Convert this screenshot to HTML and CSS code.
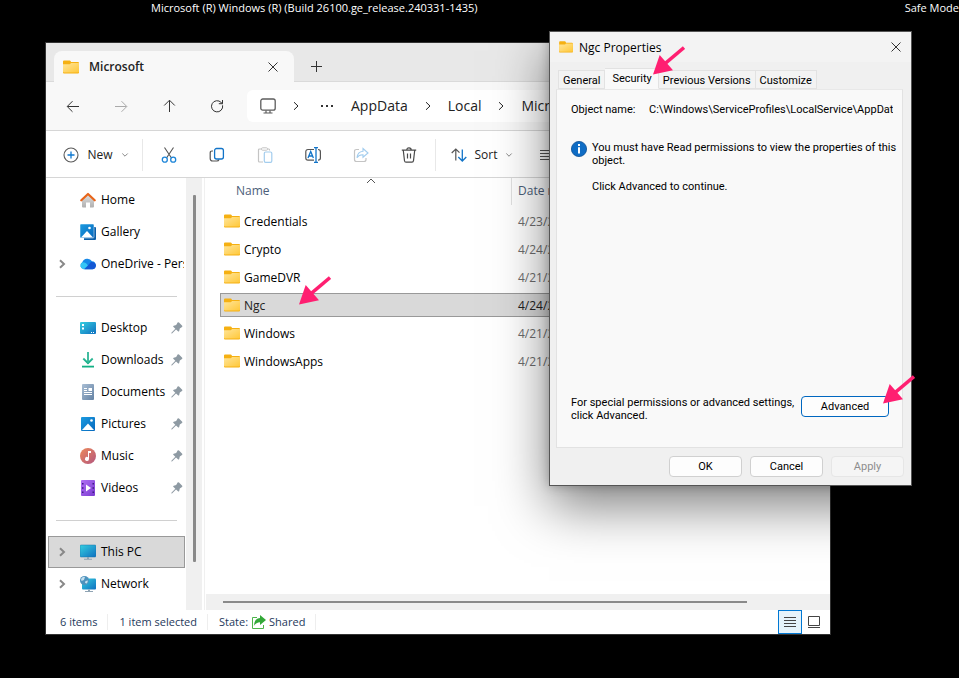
FILE: index.html
```html
<!DOCTYPE html>
<html lang="en">
<head>
    <meta charset="UTF-8">
    <meta name="viewport" content="width=device-width, initial-scale=1.0">
    <title>Ngc Properties</title>
    <link rel="stylesheet" href="styles.css">
</head>
<body>
    <!-- shared icons -->
    <svg class="sprite" aria-hidden="true">
        <defs>
            <linearGradient id="gFolder" x1="0" y1="0" x2="1" y2="1"><stop offset="0" stop-color="#ffe59a"/><stop offset="1" stop-color="#ffc83a"/></linearGradient>
            <linearGradient id="gBlue" x1="0" y1="0" x2="1" y2="1"><stop offset="0" stop-color="#1c9be0"/><stop offset="1" stop-color="#0668bd"/></linearGradient>
            <linearGradient id="gScreen" x1="0" y1="0" x2="1" y2="1"><stop offset="0" stop-color="#35cfe0"/><stop offset="1" stop-color="#0f70c0"/></linearGradient>
            <linearGradient id="gGreen" x1="0" y1="0" x2="0" y2="1"><stop offset="0" stop-color="#2fb796"/><stop offset="1" stop-color="#0fae84"/></linearGradient>
            <linearGradient id="gDoc" x1="0" y1="0" x2="1" y2="1"><stop offset="0" stop-color="#a9bed4"/><stop offset="1" stop-color="#6482a4"/></linearGradient>
            <linearGradient id="gMusic" x1="0" y1="0" x2="1" y2="1"><stop offset="0" stop-color="#ee8a5a"/><stop offset="1" stop-color="#b2567f"/></linearGradient>
            <linearGradient id="gVideo" x1="0" y1="0" x2="1" y2="1"><stop offset="0" stop-color="#b070f4"/><stop offset="1" stop-color="#7a3bd0"/></linearGradient>
            <linearGradient id="gHome" x1="0" y1="0" x2="0" y2="1"><stop offset="0" stop-color="#e0e0e0"/><stop offset="1" stop-color="#b0b0b0"/></linearGradient>
        </defs>
        <symbol id="folder" viewBox="0 0 16 14">
            <path fill="#f5b012" d="M0 1.4Q0 .4 1 .4H6.6Q7.400.400 7.700 1.200L8 2H15Q16 2 16 3V12.4Q16 13.4 15 13.4H1Q0 13.4 0 12.4Z"/>
            <path fill="url(#gFolder)" d="M0 4.200H6.600Q7.300 4.200 7.900 3H16V11.6Q16 12.5 15 12.5H1Q0 12.5 0 11.6Z"/>
        </symbol>
        <symbol id="pin" viewBox="0 0 12 12">
            <path fill="#8e9aa3" d="M6.6.6Q7.4 0 8 .6L11.2 3.8Q11.8 4.4 11 5L8.8 6.4 8.2 9Q7.8 10 7 9.300L5 7.400 1 11.400H.4V10.800L4.300 6.800 2.300 4.800Q1.700 4 2.700 3.700L5.200 3Z"/>
        </symbol>
        <symbol id="chevron" viewBox="0 0 8 10">
            <path fill="none" stroke="currentColor" d="M2 1.200 6 5 2 8.800"/>
        </symbol>
        <symbol id="down" viewBox="0 0 8 6">
            <path fill="none" stroke="#8a8a8a" d="M1.300 1.500 4 4.200 6.700 1.500"/>
        </symbol>
        <symbol id="close" viewBox="0 0 12 12">
            <path fill="none" stroke="currentColor" d="M1.500 1.500 10.500 10.500M10.500 1.500 1.500 10.500"/>
        </symbol>
        <symbol id="arrow" viewBox="0 0 32 29">
            <path fill="#ff1f71" d="M0 28.500 6.700 9 20 24.300Z"/>
            <path stroke="#ff1f71" stroke-width="3.400" d="M12 17.600 31 1.500"/>
        </symbol>
    </svg>

    <header class="desktop-label">
        <span>Microsoft (R) Windows (R) (Build 26100.ge_release.240331-1435)</span>
        <span>Safe Mode</span>
    </header>

    <main class="explorer">
        <div class="tab-strip">
            <div class="tab">
                <svg class="tab-folder"><use href="#folder"/></svg>
                <span class="tab-title">Microsoft</span>
                <button class="icon-btn" aria-label="Close tab"><svg class="i12"><use href="#close"/></svg></button>
            </div>
            <button class="icon-btn new-tab" aria-label="New tab">
                <svg class="i12" viewBox="0 0 12 12"><path fill="none" stroke="#333" d="M6.500 1V12M1 6.500H12"/></svg>
            </button>
        </div>

        <nav class="nav-bar">
            <button class="nav-btn" aria-label="Back"><svg class="i14" viewBox="0 0 14 14"><path fill="none" stroke="#333" d="M13 7.500H1.500M6.500 2.200 1.200 7.500 6.500 12.800"/></svg></button>
            <button class="nav-btn" aria-label="Forward" disabled><svg class="i14" viewBox="0 0 14 14"><path fill="none" stroke="#aaa" d="M1 7.500H12.500M7.500 2.200 12.800 7.500 7.500 12.800"/></svg></button>
            <button class="nav-btn" aria-label="Up"><svg class="i14" viewBox="0 0 14 14"><path fill="none" stroke="#333" d="M7.500 13V1.500M2.200 6.500 7.500 1.200 12.800 6.500"/></svg></button>
            <button class="nav-btn" aria-label="Refresh"><svg class="i14" viewBox="0 0 14 14"><path fill="none" stroke="#333" d="M12.600 6.300A5.600 5.600 0 1 1 11.200 3.500L12.400 4.700M12.500 1V4.700H8.800"/></svg></button>
            <div class="address">
                <svg class="i16" viewBox="0 0 16 16"><rect x=".8" y="1" width="14.400" height="11.200" rx="2" fill="none" stroke="#5c5c5c" stroke-width="1.300"/><path stroke="#5c5c5c" stroke-width="1.200" d="M6 12.500V15M10 12.500V15M3.500 15H12.500" fill="none"/></svg>
                <svg class="crumb-sep"><use href="#chevron"/></svg>
                <svg class="dots" viewBox="0 0 12 4"><path fill="#333" d="M0 1H2V3H0ZM5 1H7V3H5ZM10 1H12V3H10Z"/></svg>
                <a href="#">AppData</a>
                <svg class="crumb-sep"><use href="#chevron"/></svg>
                <a href="#">Local</a>
                <svg class="crumb-sep"><use href="#chevron"/></svg>
                <a href="#">Microsoft</a>
            </div>
        </nav>

        <div class="toolbar">
            <button class="tool tool-new">
                <svg class="i16" viewBox="0 0 16 16"><circle cx="8" cy="8" r="7" fill="none" stroke="#5a5a5a" stroke-width="1.100"/><path stroke="#0f78d0" stroke-width="1.300" d="M8 4.500V11.500M4.500 8H11.500"/></svg>
                <span>New</span>
                <svg class="caret"><use href="#down"/></svg>
            </button>
            <div class="tool-group">
                <button class="tool" aria-label="Cut"><svg class="i16" viewBox="0 0 16 16"><path fill="none" stroke="#555" stroke-width="1.100" d="M3.500.5 10.500 11M12.500.5 5.500 11"/><g fill="none" stroke="#1b84d8" stroke-width="1.300"><circle cx="3.800" cy="12.700" r="2.500"/><circle cx="12.200" cy="12.700" r="2.500"/></g></svg></button>
                <button class="tool" aria-label="Copy"><svg class="i16" viewBox="0 0 16 16"><path fill="none" stroke="#555" stroke-width="1.200" d="M4 4H3Q1.200 4 1.200 6V11.500Q1.200 14 3.700 14H8Q9.500 14 10 12.500"/><rect x="5.600" y="1.500" width="8.800" height="10.500" rx="2" fill="#fff" stroke="#1274c8" stroke-width="1.300"/></svg></button>
                <button class="tool" aria-label="Paste" disabled><svg class="i16" viewBox="0 0 16 16"><path fill="none" stroke="#c4c4c4" stroke-width="1.200" d="M5 2H2.500Q1.500 2 1.500 3V14Q1.500 15 2.500 15H6M10 2H11.800Q12.600 2 12.600 3.500"/><rect x="4.500" y=".8" width="6" height="2.400" rx="1" fill="#fff" stroke="#c4c4c4"/><rect x="7.300" y="5" width="7.500" height="10.300" rx="1.300" fill="#fff" stroke="#a3cdee" stroke-width="1.200"/></svg></button>
                <button class="tool" aria-label="Rename"><svg class="i16" viewBox="0 0 16 16"><path fill="none" stroke="#555" stroke-width="1.200" d="M9 2.500H3Q.8 2.500.8 4.700V11Q.8 13.200 3 13.200H9M13 2.500Q15.400 2.500 15.400 4.700V11Q15.400 13.200 13 13.200"/><path fill="none" stroke="#1274c8" stroke-width="1.300" d="M3 11 5.700 4.500 8.400 11M4 9H7.500M11 .7V15.300M9 .7H13M9 15.300H13"/></svg></button>
                <button class="tool" aria-label="Share" disabled><svg class="i16" viewBox="0 0 16 16"><path fill="none" stroke="#c4c4c4" stroke-width="1.200" d="M6 2.500H3.500Q1.500 2.500 1.500 4.500V12.500Q1.500 14.500 3.500 14.500H11Q13 14.500 13 12.500V11"/><path fill="#fff" stroke="#a3cdee" stroke-width="1.100" d="M10 1.500 15 6 10 10.200V7.800Q6 7.600 4 10.700 4.500 4.800 10 4.200Z"/></svg></button>
                <button class="tool" aria-label="Delete"><svg class="i16" viewBox="0 0 16 16"><path fill="none" stroke="#4a4a4a" stroke-width="1.200" d="M.8 3.200H15.200M5.800 3Q5.800.8 8 .8T10.200 3M2.300 3.500 3.500 13.700Q3.700 15.200 5 15.200H11Q12.300 15.200 12.500 13.700L13.700 3.500M6.500 6.500V11.500M9.500 6.500V11.500"/></svg></button>
            </div>
            <button class="tool tool-sort">
                <svg class="i16" viewBox="0 0 16 16"><path fill="none" stroke="#555" stroke-width="1.200" d="M4.800 13.500V2M.7 6 4.800 2 8.500 5.700"/><path fill="none" stroke="#1274c8" stroke-width="1.300" d="M11.300 2.500V14M7.300 10 11.300 14 15.300 10"/></svg>
                <span>Sort</span>
                <svg class="caret"><use href="#down"/></svg>
            </button>
            <button class="tool tool-view" aria-label="View"><svg class="i16" viewBox="0 0 16 16"><path stroke="#555" d="M0 3.500H15M0 6.500H15M0 9.500H15M0 12.500H15"/></svg></button>
        </div>

        <div class="content">
            <aside class="sidebar">
                <div class="tree">
                    <a href="#" class="tree-item"><i class="expand"></i>
                        <svg class="i16" viewBox="0 0 16 16"><path fill="url(#gHome)" d="M2 7 8 2 14 7V14.500Q14 15.500 13 15.500H10V10.500H6V15.500H3Q2 15.500 2 14.500Z"/><path fill="none" stroke="#e8651a" stroke-width="2.200" stroke-linecap="round" stroke-linejoin="round" d="M1.300 8.300 8 2 14.700 8.300"/></svg>
                        <span>Home</span></a>
                    <a href="#" class="tree-item"><i class="expand"></i>
                        <svg class="i16" viewBox="0 0 16 16"><path fill="#0a5ea8" d="M4 3H15Q16 3 16 4V15Q16 16 15 16H4Z"/><rect width="14" height="14" rx="1" fill="url(#gBlue)" stroke="#fff" stroke-width=".5"/><path fill="#fff" d="M1 13.500 7 7 13 13.500Z"/><circle cx="9.500" cy="4" r="1.300" fill="#fff"/></svg>
                        <span>Gallery</span></a>
                    <a href="#" class="tree-item"><i class="expand"><svg><use href="#chevron"/></svg></i>
                        <svg class="i16" viewBox="0 0 16 16"><path fill="#1688e8" d="M3.800 13.200A3.800 3.800 0 0 1 2.300 6.200 5.500 5.500 0 0 1 12 5.300 4 4 0 0 1 12.500 13.200Z"/><path fill="#1458d4" d="M4.500 13.200 11 6Q15.800 5.800 16 9.500 15.800 13 12.500 13.200Z"/><path fill="#36c5f5" d="M3.800 13.200A3.800 3.800 0 0 1 2.300 6.200Q6 6 7.800 9.500Z"/></svg>
                        <span>OneDrive - Personal</span></a>
                    <hr>
                    <a href="#" class="tree-item"><i class="expand"></i>
                        <svg class="i16" viewBox="0 0 16 16"><rect y="2" width="16" height="12" rx="1" fill="url(#gScreen)"/><path fill="#fff" d="M2 4H4V6H2ZM2 7.500H4V9.500H2ZM11 12H12V13H11ZM13 12H14V13H13Z"/></svg>
                        <span>Desktop</span><svg class="pin"><use href="#pin"/></svg></a>
                    <a href="#" class="tree-item"><i class="expand"></i>
                        <svg class="i16" viewBox="0 0 16 16"><path fill="none" stroke="url(#gGreen)" stroke-width="1.800" d="M3.300 6.500 8 11.200 12.700 6.500"/><path fill="#2db596" d="M7.100 0H8.900V11H7.100Z"/><path fill="#12b084" d="M2 13.700H14V15.500H2Z"/></svg>
                        <span>Downloads</span><svg class="pin"><use href="#pin"/></svg></a>
                    <a href="#" class="tree-item"><i class="expand"></i>
                        <svg class="i16" viewBox="0 0 16 16"><rect x="2" width="12" height="16" rx="1" fill="url(#gDoc)"/><path fill="none" stroke="#fff" d="M4 4.500H7M4 6.500H7M4 8.500H12M4 10.500H12"/><path fill="#fff" d="M8.500 4H12V7H8.500Z"/></svg>
                        <span>Documents</span><svg class="pin"><use href="#pin"/></svg></a>
                    <a href="#" class="tree-item"><i class="expand"></i>
                        <svg class="i16" viewBox="0 0 16 16"><rect x="1" y="1" width="14" height="14" rx="1" fill="url(#gBlue)"/><path fill="#fff" d="M2 14 8 7.500 14 14Z"/><circle cx="11.500" cy="4.500" r="1.300" fill="#fff"/></svg>
                        <span>Pictures</span><svg class="pin"><use href="#pin"/></svg></a>
                    <a href="#" class="tree-item"><i class="expand"></i>
                        <svg class="i16" viewBox="0 0 16 16"><circle cx="8" cy="8" r="8" fill="url(#gMusic)"/><path fill="#fff" d="M8 3H11V5H9V11A2 2 0 1 1 8 9.200Z"/></svg>
                        <span>Music</span><svg class="pin"><use href="#pin"/></svg></a>
                    <a href="#" class="tree-item"><i class="expand"></i>
                        <svg class="i16" viewBox="0 0 16 16"><rect x="1" width="14" height="16" rx="1" fill="url(#gVideo)"/><path fill="#3f1b85" d="M2 3H3.500V4.500H2ZM2 7.300H3.500V8.800H2ZM2 11.600H3.500V13.100H2ZM12.500 3H14V4.500H12.500ZM12.500 7.300H14V8.800H12.500ZM12.500 11.600H14V13.100H12.500Z"/><path fill="#fff" d="M6 4.500 11 8 6 11.500Z"/></svg>
                        <span>Videos</span><svg class="pin"><use href="#pin"/></svg></a>
                    <hr>
                    <a href="#" class="tree-item selected"><i class="expand"><svg><use href="#chevron"/></svg></i>
                        <svg class="i16" viewBox="0 0 16 16"><rect y="1" width="16" height="12" rx="1" fill="url(#gScreen)" stroke="#1876a8" stroke-width=".5"/><path fill="#8fa3b3" d="M7 13H9V14.800H12V15.700H4V14.800H7Z"/></svg>
                        <span>This PC</span></a>
                    <a href="#" class="tree-item"><i class="expand"><svg><use href="#chevron"/></svg></i>
                        <svg class="i16" viewBox="0 0 16 16"><rect x="2" y="2.500" width="14" height="11" rx="1" fill="url(#gScreen)"/><path fill="#8fa3b3" d="M8 13.500H10V15H13V16H5V15H8Z"/><circle cx="4.500" cy="4.500" r="4.500" fill="#4d92bd"/><path fill="#c3dfee" d="M1 3Q3 0 5 1L4 4 1.500 5ZM5.500 5 8 4.500 7 7.500 5 7Z"/></svg>
                        <span>Network</span></a>
                </div>
                <div class="v-scroll"><div class="v-thumb"></div></div>
            </aside>

            <section class="files">
                <table>
                    <thead>
                        <tr>
                            <th class="col-name">Name
                                <svg class="sort-caret" viewBox="0 0 10 6"><path fill="none" stroke="#555" d="M1 5 5 1 9 5"/></svg>
                            </th>
                            <th class="col-date">Date modified</th>
                        </tr>
                    </thead>
                    <tbody>
                        <tr><td><div class="file"><svg class="row-folder"><use href="#folder"/></svg>Credentials</div></td><td>4/23/2025</td></tr>
                        <tr><td><div class="file"><svg class="row-folder"><use href="#folder"/></svg>Crypto</div></td><td>4/24/2025</td></tr>
                        <tr><td><div class="file"><svg class="row-folder"><use href="#folder"/></svg>GameDVR</div></td><td>4/21/2025</td></tr>
                        <tr class="selected"><td><div class="file"><svg class="row-folder"><use href="#folder"/></svg>Ngc<svg class="pointer pointer-row"><use href="#arrow"/></svg></div></td><td>4/24/2025</td></tr>
                        <tr><td><div class="file"><svg class="row-folder"><use href="#folder"/></svg>Windows</div></td><td>4/21/2025</td></tr>
                        <tr><td><div class="file"><svg class="row-folder"><use href="#folder"/></svg>WindowsApps</div></td><td>4/21/2025</td></tr>
                    </tbody>
                </table>
                <div class="h-scroll"><div class="h-thumb"></div></div>
            </section>
        </div>

        <footer class="status-bar">
            <span class="status">6 items</span>
            <span class="status">1 item selected</span>
            <span class="status">State:
                <svg class="shared-icon" viewBox="0 0 15 16"><path fill="none" stroke="#4db54a" d="M6 3.500H1.500V14.500H12.500V11"/><path fill="#33a838" d="M9 1 15 6 9 11V8.300Q5 8.500 2.800 12 3 4.500 9 4Z"/></svg>
                Shared</span>
            <div class="view-switch">
                <button class="view-btn active" aria-label="Details view"><svg class="i12" viewBox="0 0 12 12"><path stroke="#444" d="M0 1.500H12M0 4.500H12M0 7.500H12M0 10.500H12"/></svg></button>
                <button class="view-btn" aria-label="Large icons view"><svg class="i12" viewBox="0 0 12 12"><path fill="none" stroke="#444" d="M.5.5H11.500V9.500H.5ZM0 11.500H12"/></svg></button>
            </div>
        </footer>
    </main>

    <section class="dialog" role="dialog" aria-labelledby="dialogTitle">
        <div class="dialog-title">
            <svg class="dialog-folder"><use href="#folder"/></svg>
            <h2 id="dialogTitle">Ngc Properties</h2>
            <button class="icon-btn" aria-label="Close"><svg class="i12"><use href="#close"/></svg></button>
        </div>
        <div class="dialog-tabs" role="tablist">
            <button role="tab">General</button>
            <button role="tab" class="active" aria-selected="true">Security<svg class="pointer pointer-tab"><use href="#arrow"/></svg></button>
            <button role="tab">Previous Versions</button>
            <button role="tab">Customize</button>
        </div>
        <div class="panel">
            <div class="object-row">
                <label for="objectName">Object name:</label>
                <input type="text" id="objectName" value="C:\Windows\ServiceProfiles\LocalService\AppData" readonly>
            </div>
            <div class="message">
                <svg class="i16" viewBox="0 0 16 16"><circle cx="8" cy="8" r="7.600" fill="#0f6cc4" stroke="#0c4f94" stroke-width=".8"/><path fill="#fff" d="M7 3H9V5H7ZM7 6.300H9V12.500H7Z"/></svg>
                <div>
                    <p>You must have Read permissions to view the properties of this object.</p>
                    <p>Click Advanced to continue.</p>
                </div>
            </div>
            <div class="advanced-row">
                <p>For special permissions or advanced settings, click Advanced.</p>
                <button class="btn btn-focus">Advanced<svg class="pointer pointer-btn"><use href="#arrow"/></svg></button>
            </div>
        </div>
        <div class="dialog-footer">
            <button class="btn">OK</button>
            <button class="btn">Cancel</button>
            <button class="btn" disabled>Apply</button>
        </div>
    </section>
</body>
</html>
```
FILE: styles.css
```css
* { box-sizing: border-box; }
body {
    position: relative;
    margin: 0;
    height: 100vh;
    overflow: hidden;
    background: #000;
    color: #000;
    font-family: "Open Sans", "Noto Sans", sans-serif;
    font-size: 12px;
    line-height: 16px;
}
button { font: inherit; color: inherit; border: none; background: none; padding: 0; }
a { color: inherit; text-decoration: none; }
p, h2 { margin: 0; font: inherit; }
svg { flex: none; display: block; }
.sprite { position: absolute; width: 0; height: 0; }
.i12 { width: 12px; height: 12px; }
.i14 { width: 14px; height: 14px; }
.i16 { width: 16px; height: 16px; }

.desktop-label {
    display: flex;
    justify-content: space-between;
    padding-left: 151px;
    color: #fff;
    font-size: 11px;
}

/* explorer window */
.explorer {
    position: absolute;
    top: 42px;
    right: 128px;
    bottom: 43px;
    left: 45px;
    display: flex;
    flex-direction: column;
    border: 1px solid #333;
    background: #fff;
    overflow: hidden;
}
.tab-strip {
    display: flex;
    align-items: center;
    height: 39px;
    padding-left: 8px;
    background: #e8e8e8;
    border-bottom: 1px solid #dadada;
}
.tab {
    display: flex;
    align-items: center;
    align-self: flex-end;
    width: 240px;
    height: 31px;
    margin-bottom: -1px;
    padding: 0 15px 0 9px;
    border-radius: 8px 8px 0 0;
    background: #f8f8f8;
}
.tab-folder { width: 16px; height: 14px; }
.tab-title { flex: 1; margin-left: 10px; font-weight: 600; color: #222; }
.icon-btn { display: flex; color: #333; }
.new-tab { margin: 8px 0 0 16px; }

.nav-bar {
    display: flex;
    align-items: center;
    height: 49px;
    padding-left: 3px;
    background: #f8f8f8;
    border-bottom: 1px solid #d6d6d6;
}
.nav-btn { display: flex; justify-content: center; width: 48px; }
.address {
    display: flex;
    align-items: center;
    flex: 1;
    height: 32px;
    margin-left: 6px;
    padding-left: 13px;
    border-radius: 6px;
    background: #fff;
    color: #222;
    font-size: 14px;
    line-height: 20px;
}
.crumb-sep { width: 8px; height: 10px; margin: 0 16px; }
.dots { width: 12px; height: 4px; margin: 0 18px 0 5px; }

.toolbar {
    display: flex;
    align-items: center;
    height: 47px;
    padding-top: 2px;
    border-bottom: 1px solid #d6d6d6;
    color: #222;
}
.tool { display: flex; align-items: center; justify-content: center; width: 48px; }
.tool-new { width: 96px; gap: 8px; padding-left: 4px; }
.caret { width: 8px; height: 6px; }
.tool-group {
    display: flex;
    align-items: center;
    height: 32px;
    padding: 0 2px;
    border: solid #e8e8e8;
    border-width: 0 1px;
}
.tool-sort { width: 92px; gap: 8px; }
.tool-view { width: 40px; }

.content { display: flex; flex: 1; min-height: 0; }
.sidebar { display: flex; width: 159px; border-right: 1px solid #f0f0f0; }
.tree { width: 140px; padding: 6px 1px 0 2px; }
.tree-item {
    display: flex;
    align-items: center;
    gap: 5px;
    height: 32px;
    padding-right: 1px;
    border: 1px solid transparent;
    white-space: nowrap;
    overflow: hidden;
}
.tree-item.selected { background: #d9d9d9; border-color: #999; }
.tree-item span { flex: 1; }
.expand { width: 26px; padding-left: 9px; color: #888; flex: none; }
.expand svg { width: 8px; height: 10px; stroke-width: 2px; }
.pin { width: 12px; height: 12px; }
.tree hr { height: 1px; margin: 16px 8px 15px; border: none; background: #d0d0d0; }
.v-scroll { width: 16px; padding: 17px 6px 48px 7px; background: #f0f0f0; }
.v-thumb { height: 100%; background: #8a8a8a; border-radius: 1px; }

.files { display: flex; flex: 1; flex-direction: column; justify-content: space-between; padding-left: 1px; min-width: 0; }
table {
    margin: -4px 0 0 14px;
    border-spacing: 0 4px;
    table-layout: fixed;
}
th { position: relative; height: 27px; padding: 0 0 2px; text-align: left; font-weight: 400; color: #4c607a; }
.col-name { width: 291px; padding-left: 16px; }
.col-date { padding-left: 6px; border-left: 1px solid #e0e0e0; }
.sort-caret { position: absolute; top: 0; left: 50%; width: 10px; height: 6px; }
td { height: 24px; padding: 1px 0 0 7px; border: solid transparent; border-width: 1px 0; color: #6d6d6d; }
td:first-child { padding-left: 3px; border-left-width: 1px; color: #000; }
.file { position: relative; display: flex; align-items: center; gap: 4px; }
.row-folder { width: 16px; height: 14px; margin-bottom: 2px; }
tr.selected td { background: #d9d9d9; border-color: #999; color: #222; }
.h-scroll { height: 16px; padding: 7px 83px 7px 17px; background: #f0f0f0; }
.h-thumb { height: 2px; background: #8a8a8a; }

.status-bar { display: flex; align-items: center; height: 24px; padding-left: 3px; color: #1e395b; font-size: 11px; }
.status { display: flex; align-items: center; gap: 3px; padding: 0 10px 0 11px; border-right: 1px solid #eee; }
.shared-icon { width: 15px; height: 16px; }
.view-switch { display: flex; margin-left: auto; padding-right: 4px; }
.view-btn { display: flex; align-items: center; justify-content: center; width: 24px; height: 24px; }
.view-btn.active { border: 1px solid #0078d4; background: #e5f3fb; }

/* properties dialog */
.dialog {
    position: absolute;
    top: 31px;
    right: 47px;
    width: 363px;
    border: 1px solid #555;
    background: #f0f0f0;
    box-shadow: 0 20px 50px rgba(0, 0, 0, 0.5), 0 0 10px rgba(0, 0, 0, 0.25);
    font-family: Roboto, "Liberation Sans", sans-serif;
    font-size: 11px;
    line-height: 13px;
}
.dialog-title { display: flex; align-items: center; height: 30px; padding: 0 9px; background: #f3f3f3; }
.dialog-folder { width: 14px; height: 12px; }
.dialog-title h2 { flex: 1; margin-left: 6px; font-family: "Open Sans", sans-serif; font-size: 12px; }
.dialog-tabs { display: flex; align-items: flex-end; height: 27px; padding-left: 8px; }
.dialog-tabs button {
    height: 19px;
    padding: 2px 4px 0;
    border: 1px solid #e2e2e2;
    border-left-width: 0;
    background: #f3f3f3;
}
.dialog-tabs button:first-child { border-left-width: 1px; }
.dialog-tabs .active {
    position: relative;
    height: 21px;
    padding: 0 6px 1px 7px;
    border-bottom-color: #f9f9f9;
    background: #f9f9f9;
}
.panel {
    display: flex;
    flex-direction: column;
    height: 359px;
    margin: 0 8px 0 6px;
    padding: 13px 13px 25px 14px;
    border: 1px solid #e2e2e2;
    border-top-color: #e8e8e8;
    background: #f9f9f9;
}
.object-row { display: flex; align-items: center; margin-right: -4px; }
.object-row label { width: 78px; }
.object-row input {
    flex: 1;
    min-width: 0;
    height: 13px;
    padding: 0;
    border: none;
    outline: none;
    background: none;
    font: inherit;
}
.message { display: flex; gap: 5px; margin: 25px -12px 0 0; }
.message p + p { margin-top: 13px; }
.advanced-row { display: flex; justify-content: space-between; margin-top: auto; }
.advanced-row p { width: 224px; }
.btn {
    width: 73px;
    height: 21px;
    border: 1px solid #d0d0d0;
    border-radius: 4px;
    background: #fdfdfd;
}
.btn:disabled { background: #f5f5f5; border-color: #e6e6e6; color: #8d8d8d; }
.btn-focus { position: relative; width: 88px; border-color: #0067c0; }
.dialog-footer { display: flex; justify-content: flex-end; gap: 8px; padding: 8px 7px 8px; }

/* callout arrows */
.pointer { position: absolute; width: 32px; height: 29px; pointer-events: none; z-index: 1; }
.pointer-row { left: 75px; bottom: 9px; }
.pointer-tab { left: 48px; bottom: 13px; }
.pointer-btn { left: 81px; bottom: 12px; }
```
